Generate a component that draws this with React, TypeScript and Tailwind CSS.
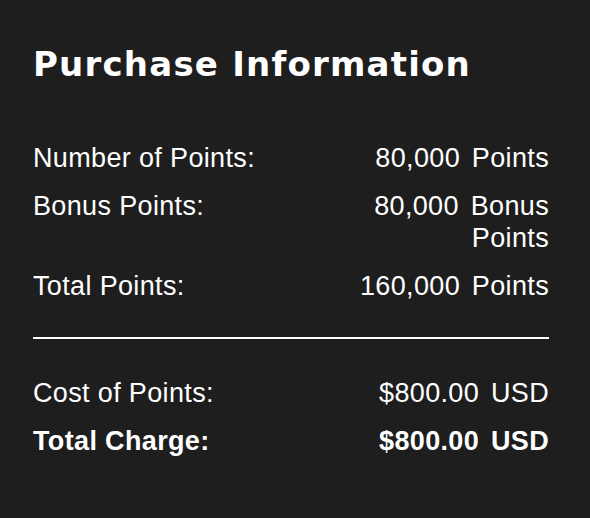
const rows = [
  { label: 'Number of Points:', value: ['80,000', 'Points'] },
  { label: 'Bonus Points:', value: ['80,000', 'Bonus', 'Points'] },
  { label: 'Total Points:', value: ['160,000', 'Points'] },
];

const charges = [
  { label: 'Cost of Points:', value: '$800.00 USD', bold: false },
  { label: 'Total Charge:', value: '$800.00 USD', bold: true },
];

export default function App() {
  return (
    <div className="w-[590px] h-[518px] bg-[#1e1e1e] text-white px-[33px] pt-[42px]">
      <h1 className="font-['DejaVu_Sans',sans-serif] text-[34px] leading-[44px] font-bold tracking-[1.2px]">
        Purchase Information
      </h1>

      <div className="w-[516px] mt-[56px] font-['Liberation_Sans',Arial,sans-serif] text-[27px] leading-[32px] tracking-[0.35px]">
        <div className="flex flex-col gap-4">
          {rows.map((r) => (
            <div key={r.label} className="flex justify-between">
              <span>{r.label}</span>
              <span className="w-[230px] text-right [word-spacing:4px]">{r.value.join(' ')}</span>
            </div>
          ))}
        </div>

        <div className="h-[2px] bg-white mt-[35px] mb-[38px]" />

        <div className="flex flex-col gap-4">
          {charges.map((c) => (
            <div key={c.label} className={`flex justify-between ${c.bold ? 'font-bold' : ''}`}>
              <span>{c.label}</span>
              <span className="text-right [word-spacing:4px]">{c.value}</span>
            </div>
          ))}
        </div>
      </div>
    </div>
  );
}
